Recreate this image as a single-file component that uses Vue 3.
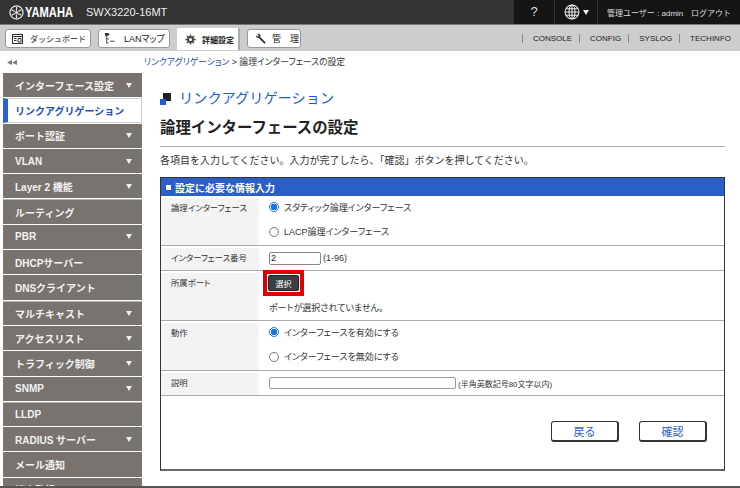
<template>
  <div class="page">
    <header class="top">
      <div class="brand">
        <svg class="logo" viewBox="0 0 16 16" width="15" height="15">
          <circle cx="8" cy="8" r="7" fill="none" stroke="#e8e8e8" stroke-width="1.300" />
          <circle cx="8" cy="8" r="1.600" fill="#e8e8e8" />
          <path d="M8 2v4M8 10v4M2.800 5l3.400 2M9.800 9l3.400 2M2.800 11l3.400-2M9.800 7l3.400-2" stroke="#e8e8e8" stroke-width="1.300" />
        </svg>
        <span class="yamaha">YAMAHA</span>
        <span class="model">SWX3220-16MT</span>
      </div>
      <div class="top-right">
        <div class="help">?</div>
        <div class="lang">
          <svg viewBox="0 0 18 18" width="16" height="16" fill="none" stroke="#eee" stroke-width="1.200">
            <circle cx="9" cy="9" r="7.800" />
            <ellipse cx="9" cy="9" rx="3.400" ry="7.800" />
            <path d="M9 1.200v15.600M1.200 9h15.600M2.500 5.400h13M2.500 12.600h13" />
          </svg>
          <span class="caret light"></span>
        </div>
        <div class="user">
          <span>管理ユーザー : admin</span>
          <span>ログアウト</span>
        </div>
      </div>
    </header>

    <nav class="toolbar">
      <div class="tabs">
        <div class="tab dash">
          <svg viewBox="0 0 11 10" width="11" height="10" fill="none" stroke="#333">
            <rect x="0.500" y="0.500" width="10" height="9" />
            <path d="M1 2.500h9M2 4.500h2.500M2 6.500h2.500M6 4.500h3v3.500H6z" />
          </svg>
          <span>ダッシュボード</span>
        </div>
        <div class="tab lan">
          <svg viewBox="0 0 12 14" width="11" height="13" fill="none" stroke="#333">
            <path d="M3 1v11M3 2.500h3M3 7.500h2M3 12h2M6.500 10h5" />
            <rect x="1" y="1" width="4" height="3" fill="#333" stroke="none" />
          </svg>
          <span>LANマップ</span>
        </div>
        <div class="tab current">
          <svg viewBox="0 0 14 14" width="11" height="11">
            <circle cx="7" cy="7" r="3.200" fill="none" stroke="#444" stroke-width="2.400" />
            <path d="M7 0.500v2.500M7 11v2.500M0.500 7h2.500M11 7h2.500M2.400 2.400l1.800 1.800M9.800 9.800l1.800 1.800M2.400 11.600l1.800-1.800M9.800 4.200l1.800-1.800" stroke="#444" stroke-width="1.800" />
          </svg>
          <span>詳細設定</span>
        </div>
        <div class="tab admin">
          <svg viewBox="0 0 12 12" width="11" height="11" fill="none">
            <path d="M11 11L4.500 4.500" stroke="#333" stroke-width="2" />
            <path d="M1 2.500L2.500 4 4 2.500 2.500 1l2-.5 1.500 2-.5 2.500-2.500.5-2-1.500z" fill="#333" />
          </svg>
          <span>管　理</span>
        </div>
      </div>
      <div class="tools">
        <span v-for="t in tools" :key="t">{{ t }}</span>
      </div>
    </nav>

    <div class="body">
      <aside class="side">
        <div class="collapse">
          <svg viewBox="0 0 10 5" width="10" height="5" fill="#777">
            <path d="M0 2.500L5 0v5zM5 2.500L10 0v5z" />
          </svg>
        </div>
        <div
          v-for="m in menu"
          :key="m.label"
          class="menu-item"
          :class="{ active: m.active, thick: m.thick }"
        >
          <span>{{ m.label }}</span>
          <i v-if="m.sub" class="caret"></i>
        </div>
      </aside>

      <main class="main">
        <div class="crumb"><a>リンクアグリゲーション</a> &gt; 論理インターフェースの設定</div>
        <div class="content">
          <h1 class="title">
            <span class="mark"><b></b><i></i></span>
            リンクアグリゲーション
          </h1>
          <h2 class="sub-title">論理インターフェースの設定</h2>
          <p class="lead">各項目を入力してください。入力が完了したら、「確認」ボタンを押してください。</p>

          <section class="panel">
            <div class="panel-head"><i></i>設定に必要な情報入力</div>

            <div class="row tall">
              <div class="label">論理インターフェース</div>
              <div class="value">
                <label class="radio"><i class="dot on"></i>スタティック論理インターフェース</label>
                <label class="radio"><i class="dot"></i>LACP論理インターフェース</label>
              </div>
            </div>

            <div class="row">
              <div class="label">インターフェース番号</div>
              <div class="value inline">
                <input class="num" value="2" />
                <span class="range">(1-96)</span>
              </div>
            </div>

            <div class="row tall">
              <div class="label">所属ポート</div>
              <div class="value port">
                <div class="select-wrap"><button class="select-btn">選択</button></div>
                <div>ポートが選択されていません。</div>
              </div>
            </div>

            <div class="row tall">
              <div class="label">動作</div>
              <div class="value">
                <label class="radio"><i class="dot on"></i>インターフェースを有効にする</label>
                <label class="radio"><i class="dot"></i>インターフェースを無効にする</label>
              </div>
            </div>

            <div class="row">
              <div class="label">説明</div>
              <div class="value inline">
                <input class="desc" />
                <span>(半角英数記号80文字以内)</span>
              </div>
            </div>

            <div class="actions">
              <button>戻る</button>
              <button>確認</button>
            </div>
          </section>
        </div>
      </main>
    </div>
  </div>
</template>

<script setup>
const tools = ['CONSOLE', 'CONFIG', 'SYSLOG', 'TECHINFO']

const menu = [
  { label: 'インターフェース設定', sub: true },
  { label: 'リンクアグリゲーション', active: true },
  { label: 'ポート認証', sub: true },
  { label: 'VLAN', sub: true },
  { label: 'Layer 2 機能', sub: true },
  { label: 'ルーティング', thick: true },
  { label: 'PBR', sub: true },
  { label: 'DHCPサーバー' },
  { label: 'DNSクライアント' },
  { label: 'マルチキャスト', sub: true, thick: true },
  { label: 'アクセスリスト', sub: true },
  { label: 'トラフィック制御', sub: true },
  { label: 'SNMP', sub: true },
  { label: 'LLDP', thick: true },
  { label: 'RADIUS サーバー', sub: true },
  { label: 'メール通知' },
  { label: '端末監視' }
]
</script>

<style>
html, body {
  margin: 0;
  background: #fff;
  overflow: hidden;
}
</style>

<style scoped>
.page {
  width: 740px;
  height: 488px;
  display: flex;
  flex-direction: column;
  overflow: hidden;
  box-sizing: border-box;
  border-bottom: 2px solid #555;
  font-family: "Liberation Sans", "Noto Sans CJK JP", sans-serif;
  font-size: 9px;
  font-feature-settings: "palt";
  color: #333;
}

/* header */
.top {
  height: 24px;
  flex: none;
  display: flex;
  justify-content: space-between;
  background: #333;
  border-bottom: 1px solid #777;
}

.brand {
  display: flex;
  align-items: center;
  padding-left: 9px;
  color: #eee;
}

.logo {
  margin-right: 1px;
}

.yamaha {
  font-size: 14px;
  font-weight: 700;
  transform: scaleX(0.8);
  transform-origin: left;
  width: 59px;
  color: #fff;
}

.model {
  font-size: 11px;
  margin-left: 2px;
}

.top-right {
  display: flex;
  width: 226px;
  background: #151515;
  color: #ddd;
}

.help {
  width: 40px;
  text-align: center;
  font-size: 13px;
  line-height: 24px;
  border-right: 1px solid #333;
}

.lang {
  width: 42px;
  display: flex;
  align-items: center;
  justify-content: center;
  gap: 3px;
  border-right: 1px solid #333;
}

.user {
  flex: 1;
  display: flex;
  justify-content: space-between;
  align-items: center;
  padding: 0 9px 0 9px;
  font-size: 8px;
  font-feature-settings: normal;
  white-space: nowrap;
}

.caret {
  width: 0;
  height: 0;
  border-left: 3px solid transparent;
  border-right: 3px solid transparent;
  border-top: 5px solid #eee;
}

/* toolbar */
.toolbar {
  height: 26px;
  flex: none;
  display: flex;
  justify-content: space-between;
  background: #cdcdcd;
}

.tabs {
  display: flex;
  gap: 7px;
  padding: 4px 0 0 5px;
}

.tab {
  height: 19px;
  display: flex;
  align-items: center;
  padding: 0 4px 0 6px;
  background: #fff;
  border: 1px solid #999;
  border-radius: 3px;
  color: #222;
  box-sizing: border-box;
  white-space: nowrap;
}

.tab svg {
  flex: none;
}

.tab.dash {
  width: 86px;
  gap: 7px;
  font-size: 8px;
  font-feature-settings: normal;
}

.tab.lan {
  width: 72px;
  gap: 9px;
  padding-left: 5px;
}

.tab.current {
  width: 63px;
  height: 22px;
  margin-top: -1px;
  padding: 0 0 0 8px;
  gap: 6px;
  border: 0;
  border-right: 2px solid #aaa;
  border-radius: 2px 2px 0 0;
  font-size: 8px;
  font-feature-settings: normal;
  font-weight: 700;
}

.tab.admin {
  width: 54px;
  gap: 6px;
  padding: 0 2px 0 7px;
}

.tools {
  display: flex;
  align-items: center;
  font-size: 8px;
  color: #222;
}

.tools span {
  height: 9px;
  line-height: 9px;
  padding: 0 7px 0 10px;
  border-left: 1px solid #888;
}

.tools span:last-child {
  padding-right: 9px;
}

/* side menu */
.body {
  flex: 1;
  min-height: 0;
  display: flex;
}

.side {
  width: 142px;
  flex: none;
  padding-left: 3px;
  box-sizing: border-box;
}

.collapse {
  height: 22px;
  display: flex;
  align-items: center;
  padding-left: 4px;
}

.menu-item {
  height: 24.300px;
  margin-bottom: 1px;
  display: flex;
  align-items: center;
  justify-content: space-between;
  padding: 0 10px 0 12px;
  background: #78736f;
  color: #f2f2f2;
  font-size: 10px;
  font-feature-settings: normal;
  font-weight: 700;
  box-sizing: border-box;
}

.menu-item.thick {
  border-top: 1px solid #b5b2b0;
}

.menu-item.active {
  background: #fff;
  color: #1c50b4;
  border-left: 5px solid #2b62d2;
  border-top: 1px solid #ccc;
  border-right: 1px solid #ccc;
  border-bottom: 1px solid #ccc;
  padding-left: 7px;
}

/* main */
.main {
  flex: 1;
  min-width: 0;
  padding-left: 2px;
}

.crumb {
  height: 23px;
  line-height: 22px;
  font-size: 8.800px;
  color: #333;
}

.crumb a {
  color: #2d4fb0;
}

.content {
  width: 565px;
  margin-left: 16px;
}

.title {
  display: flex;
  align-items: center;
  gap: 8px;
  margin: 13px 0 0;
  height: 20px;
  font-size: 14.200px;
  font-feature-settings: normal;
  font-weight: 400;
  color: #1a5ccf;
}

.mark {
  position: relative;
  width: 11px;
  height: 12px;
  margin-top: 4px;
}

.mark b {
  position: absolute;
  right: 0;
  top: 0;
  width: 8px;
  height: 8px;
  background: #222;
}

.mark i {
  position: absolute;
  left: 0;
  bottom: 0;
  width: 6px;
  height: 6px;
  background: #1f5ad8;
}

.sub-title {
  margin: 10px 0 0;
  padding-bottom: 7px;
  font-size: 15.400px;
  font-feature-settings: normal;
  line-height: 22px;
  color: #222;
  font-weight: 700;
  border-bottom: 1px solid #aaa;
}

.lead {
  margin: 7px 0 0;
  font-size: 10px;
  font-feature-settings: normal;
  line-height: 14px;
  color: #333;
}

.panel {
  margin-top: 9px;
  height: 294px;
  box-sizing: border-box;
  border: 1px solid #333;
  border-bottom: 2px solid #666;
}

.panel-head {
  height: 18px;
  display: flex;
  align-items: center;
  gap: 4px;
  padding-left: 5px;
  background: #2b5fc8;
  color: #fff;
  font-size: 10px;
  font-feature-settings: normal;
  font-weight: 700;
}

.panel-head i {
  width: 5px;
  height: 5px;
  background: #fff;
}

.row {
  height: 25px;
  display: flex;
  border-bottom: 1px solid #aaa;
  box-sizing: border-box;
}

.row.tall {
  height: 50px;
}

.label {
  width: 98px;
  flex: none;
  margin-top: 2px;
  padding: 3.500px 0 0 10px;
  box-sizing: border-box;
  background: #f3f3f3;
  color: #333;
  font-size: 8.400px;
  line-height: 12px;
  white-space: nowrap;
}

.value {
  flex: 1;
  padding-left: 10px;
  color: #333;
}

.value.inline {
  display: flex;
  align-items: center;
  gap: 2px;
  font-size: 8px;
}

.range {
  font-size: 9px;
}

.radio {
  display: flex;
  align-items: center;
  height: 24.500px;
  gap: 5px;
  position: relative;
  top: -1px;
}

.dot {
  width: 8px;
  height: 8px;
  border: 1px solid #777;
  border-radius: 50%;
  background: #fff;
}

.dot.on {
  border-color: #1a73e8;
  background: radial-gradient(circle, #1a73e8 0 3px, #fff 3.500px);
}

.num {
  width: 48px;
  height: 11px;
  padding: 0 1px;
  border: 1px solid #888;
  border-radius: 2px;
  font: 9px "Liberation Sans", sans-serif;
  color: #222;
  box-sizing: content-box;
}

.desc {
  width: 185px;
  height: 10px;
  padding: 0;
  border: 1px solid #999;
  border-radius: 2px;
}

.port {
  display: flex;
  flex-direction: column;
  gap: 5px;
}

.select-wrap {
  align-self: flex-start;
  margin: -1px 0 0 -6px;
  border: 4px solid #e00000;
  padding: 1px;
  background: #fff;
}

.select-btn {
  display: block;
  width: 31px;
  height: 16px;
  padding: 0;
  background: #3a3d42;
  color: #fff;
  border: 1px solid #222;
  border-radius: 2px;
  font: 8px "Noto Sans CJK JP", sans-serif;
}

.actions {
  display: flex;
  justify-content: flex-end;
  gap: 20px;
  padding: 25px 17px 0 0;
}

.actions button {
  width: 68px;
  height: 21px;
  padding: 0;
  background: #fff;
  border: 1px solid #333;
  border-bottom-width: 2px;
  border-right-width: 2px;
  border-radius: 3px;
  color: #2d5fc0;
  font: 11px "Liberation Sans", "Noto Sans CJK JP", sans-serif;
}
</style>
